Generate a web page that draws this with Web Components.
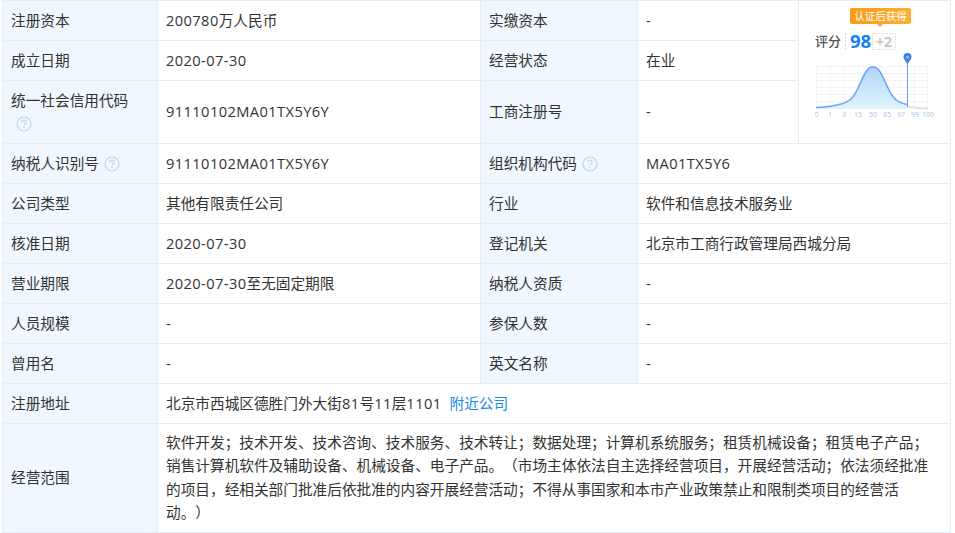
<!DOCTYPE html>
<html lang="zh-CN">
<head>
<meta charset="utf-8">
<title>工商信息</title>
<style>
  html, body { margin: 0; background: #fff; }
  body { padding-left: 2px; font-family: "Open Sans", "Noto Sans CJK SC", sans-serif; color: #333; }
</style>
</head>
<body>
<info-table></info-table>

<template id="help-tpl">
  <style>
    :host { display: inline-block; width: 16px; height: 16px; margin-left: 5px; vertical-align: -3px; }
    svg { display: block; }
  </style>
  <svg width="16" height="16" viewBox="0 0 16 16" fill="none">
    <circle cx="8" cy="8" r="7" stroke="#bcd6ef" stroke-width="1.2"/>
    <path d="M5.9 6.3C5.9 5 6.900 4.200 8 4.200s2.100.8 2.100 2c0 1.700-2.100 1.700-2.100 3.400" stroke="#bcd6ef" stroke-width="1.2"/>
    <circle cx="8" cy="11.600" r=".8" fill="#bcd6ef"/>
  </svg>
</template>

<template id="score-tpl">
  <style>
    :host { display: block; height: 142px; box-sizing: border-box; padding: 7px 0 0 16px; position: relative; }
    .tip {
      width: 61px; margin-left: 35px; height: 16px; line-height: 16px; text-align: center;
      background: linear-gradient(90deg, #fa9a1c, #fdb033); border-radius: 2px; color: #fff; font-size: 10.500px; position: relative; white-space: nowrap;
    }
    .tip::after {
      content: ""; position: absolute; left: 26px; bottom: -3px;
      border: 4px solid transparent; border-bottom: 0; border-top-color: #fba425;
    }
    .head { display: flex; align-items: center; height: 18px; margin-top: 8px; }
    .lbl { font-size: 13px; color: #555; font-weight: 500; width: 30px; height: 16px; line-height: 16px; border-right: 1px dotted #ccc; margin-right: 4px; white-space: nowrap; }
    .num { font-size: 18.500px; font-weight: 700; color: #1480f5; line-height: 18px; width: 22px; }
    .plus { width: 22px; height: 15px; line-height: 15px; text-align: center; font-size: 14px; font-weight: 700; color: #c6c6c6; border: 1px dotted #d8d8d8; }
    svg.chart { display: block; margin-top: 3px; }
    text { font-size: 7px; fill: #a9c4e6; font-family: "Open Sans", sans-serif; text-anchor: middle; }
  </style>
  <div class="tip">认证后获得</div>
  <div class="head"><span class="lbl">评分</span><span class="num">98</span><span class="plus">+2</span></div>
  <svg class="chart" width="125" height="66" viewBox="0 0 125 66">
    <defs>
      <linearGradient id="fill" x1="0" y1="0" x2="0" y2="1">
        <stop offset="0" stop-color="#b0d4f8"/>
        <stop offset="1" stop-color="#e2f5fe"/>
      </linearGradient>
    </defs>
    <g stroke="#f3f4f7" stroke-width="1" fill="none">
      <path d="M1 13.500H113M1 20.500H113M1 27.500H113M1 34.500H113M1 41.500H113M1 48.500H113"/>
      <path d="M1.500 13V55M15.500 13V55M29.500 13V55M43.500 13V55M57.500 13V55M71.500 13V55M85.500 13V55M99.500 13V55M112.500 13V55"/>
    </g>
    <path class="area" fill="url(#fill)"/>
    <path d="M92 53.500C100 55 106 55.500 113 55.500" stroke="#dedede" stroke-width="2" fill="none"/>
    <path class="curve" stroke="#69a5f6" stroke-width="1.500" fill="none"/>
    <path d="M92.500 6V54" stroke="#6a9cf5" stroke-width="1"/>
    <path d="M92.500 11C90.500 8 88.500 6.200 88.500 4a4 4 0 0 1 8 0c0 2.200-2 4-4 7Z" fill="#3f7fe8"/>
    <circle cx="92.500" cy="4" r="1.600" fill="#8fbaf5"/>
    <text x="1.500" y="63.500">0</text><text x="15" y="63.500">1</text><text x="29" y="63.500">3</text>
    <text x="43" y="63.500">15</text><text x="58" y="63.500">50</text><text x="72" y="63.500">85</text>
    <text x="86" y="63.500">97</text><text x="100" y="63.500">99</text><text x="113" y="63.500">100</text>
  </svg>
</template>

<script>
class HelpIcon extends HTMLElement {
  constructor() {
    super();
    this.attachShadow({ mode: 'open' }).appendChild(document.getElementById('help-tpl').content.cloneNode(true));
  }
}
customElements.define('help-icon', HelpIcon);

class ScoreCard extends HTMLElement {
  constructor() {
    super();
    this.attachShadow({ mode: 'open' }).appendChild(document.getElementById('score-tpl').content.cloneNode(true));
  }

  connectedCallback() {
    // flat-topped bell with heavy tails, base at y=55, peak at x=58
    const pts = [];
    for (let x = 1; x <= 92; x += 1) {
      const d = Math.abs(x - 58);
      const v = 0.72 * Math.exp(-Math.pow(d / 15, 2.5)) + 0.28 * Math.exp(-d * d / (2 * 22 * 22));
      pts.push(x + ' ' + (55 - 41 * v).toFixed(2));
    }
    const line = 'M' + pts.join('L');
    this.shadowRoot.querySelector('.curve').setAttribute('d', line);
    this.shadowRoot.querySelector('.area').setAttribute('d', line + 'L92 56L1 56Z');
  }
}
customElements.define('score-card', ScoreCard);

const help = '<help-icon></help-icon>';
const scope = '软件开发；技术开发、技术咨询、技术服务、技术转让；数据处理；计算机系统服务；租赁机械设备；租赁电子产品；销售计算机软件及辅助设备、机械设备、电子产品。（市场主体依法自主选择经营项目，开展经营活动；依法须经批准的项目，经相关部门批准后依批准的内容开展经营活动；不得从事国家和本市产业政策禁止和限制类项目的经营活动。）';
// latin runs are a bit wider in the reference font
const num = (s) => s.replace(/[0-9A-Za-z-]+/g, '<span class="n">$&</span>');

class InfoTable extends HTMLElement {
  constructor() {
    super();
    this.attachShadow({ mode: 'open' });
  }

  connectedCallback() {
    const rows = [
      ['注册资本', '200780万人民币', '实缴资本', '-', 40],
      ['成立日期', '2020-07-30', '经营状态', '在业', 40],
      ['统一社会信用代码' + help, '91110102MA01TX5Y6Y', '工商注册号', '-', 63],
      ['纳税人识别号' + help, '91110102MA01TX5Y6Y', '组织机构代码' + help, 'MA01TX5Y6', 40],
      ['公司类型', '其他有限责任公司', '行业', '软件和信息技术服务业', 40],
      ['核准日期', '2020-07-30', '登记机关', '北京市工商行政管理局西城分局', 40],
      ['营业期限', '2020-07-30至无固定期限', '纳税人资质', '-', 40],
      ['人员规模', '-', '参保人数', '-', 40],
      ['曾用名', '-', '英文名称', '-', 40],
    ];
    const body = rows.map((r, i) => `
      <tr style="height:${r[4]}px">
        <th>${r[0]}</th><td>${num(r[1])}</td><th>${r[2]}</th><td ${i > 2 ? 'colspan="2"' : ''}>${num(r[3])}</td>
        ${i === 0 ? '<td class="score" rowspan="3"><score-card></score-card></td>' : ''}
      </tr>`).join('');

    this.shadowRoot.innerHTML = `
      <style>
        :host { display: block; width: 949px; font-size: 14.67px; line-height: 23.47px; color: #333; text-spacing-trim: space-all; }
        table { width: 949px; border-collapse: collapse; table-layout: fixed; }
        th, td { border: 1px solid #e4eef6; padding: 0 8px; text-align: left; font-weight: 400; vertical-align: middle; }
        th { background: #f0f7fe; }
        td.score { padding: 0; }
        td.scope { padding: 7px 18px 7px 8px; }
        .n { letter-spacing: .4px; }
        a { color: #128bed; text-decoration: none; margin-left: 8px; }
      </style>
      <table>
        <colgroup><col style="width:155px"><col style="width:323px"><col style="width:157px"><col style="width:161px"><col style="width:152px"></colgroup>
        <tbody>
          ${body}
          <tr style="height:40px"><th>注册地址</th><td colspan="4">${num('北京市西城区德胜门外大街81号11层1101')}<a>附近公司</a></td></tr>
          <tr><th>经营范围</th><td class="scope" colspan="4">${scope}</td></tr>
        </tbody>
      </table>`;
  }
}
customElements.define('info-table', InfoTable);
</script>
</body>
</html>
